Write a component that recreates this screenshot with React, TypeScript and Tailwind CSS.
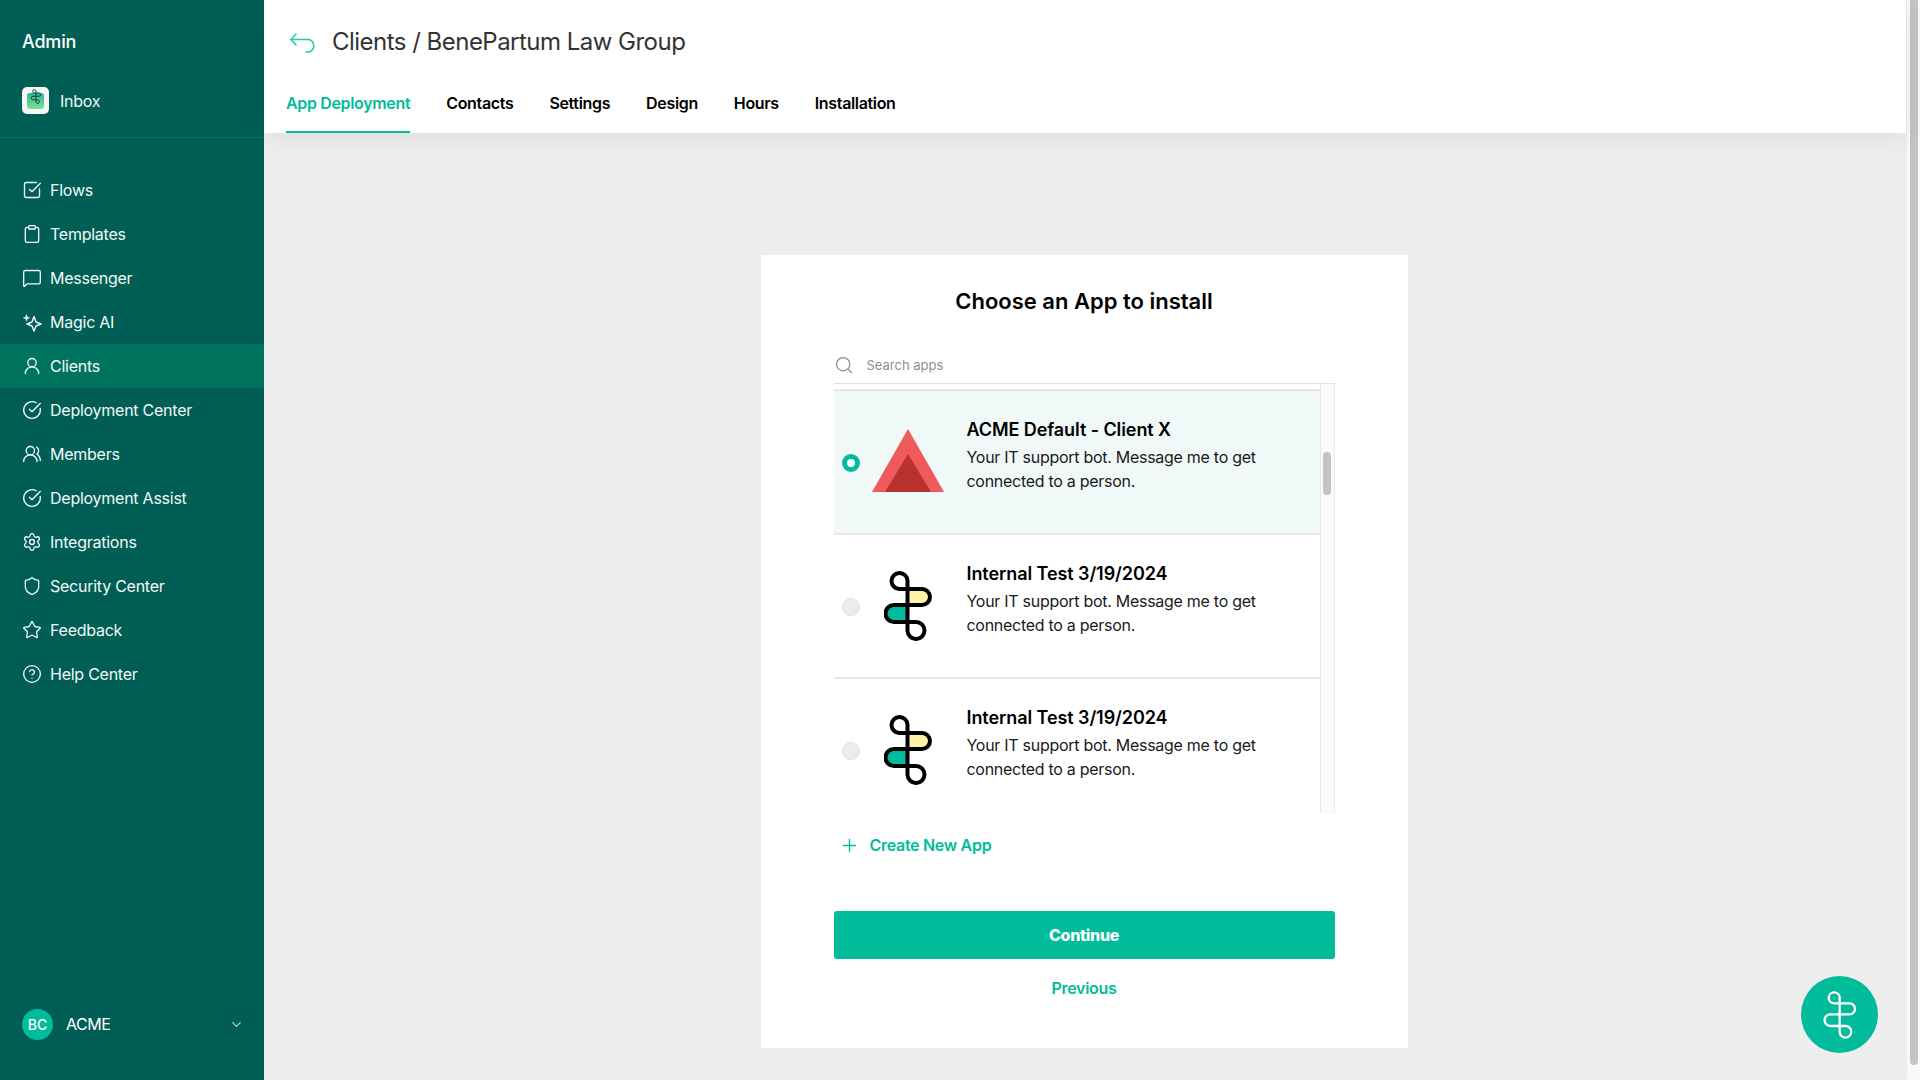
import {
  ChevronDown,
  CircleCheckBig,
  CircleHelp,
  Clipboard,
  MessageSquare,
  Plus,
  Search,
  Settings,
  Shield,
  SquareCheckBig,
  Star,
  UserRound,
  UsersRound,
  type LucideIcon,
} from "lucide-react";

function SparkleIcon({ size = 20 }: { size?: number }) {
  return (
    <svg width={size} height={size} viewBox="0 0 20 20" fill="none" stroke="currentColor" strokeWidth={1.4} strokeLinejoin="round">
      <path d="M12 4.5 L14 10 L19 12 L14 14 L12 19 L10 14 L5 12 L10 10 Z" />
      <path d="M4.5 2.5 L5.3 5 L7.8 5.9 L5.3 6.8 L4.5 9.3 L3.7 6.8 L1.2 5.9 L3.7 5 Z" fill="currentColor" strokeWidth={0.4} />
    </svg>
  );
}

const S_PATH = "M23.5 9.5 A8 8 0 1 0 15 18 H38 A8 8 0 0 1 38 34 H10 A8.5 8.5 0 0 0 10 51 H32 A8.5 8.5 0 1 1 23.5 60 V9.5";

function BrandMark({ colored, className, strokeWidth = 4 }: { colored?: boolean; className: string; strokeWidth?: number }) {
  return (
    <svg viewBox="0 0 48 70" fill="none" className={className}>
      {colored && <path d="M23.5 18 H38 A8 8 0 0 1 38 34 H23.5 Z" fill="#fff3a8" />}
      {colored && <path d="M23.5 34 H10 A8.5 8.5 0 0 0 10 51 H23.5 Z" fill="#00bc9a" />}
      <path d={S_PATH} stroke="currentColor" strokeWidth={strokeWidth} strokeLinecap="round" strokeLinejoin="round" />
    </svg>
  );
}

function TriangleLogo() {
  return (
    <svg viewBox="0 0 72 63" className="w-[72px] h-[63px]">
      <path d="M36 0 L72 63 H0 Z" fill="#ef5a5a" />
      <path d="M36 25 L59 63 H13 Z" fill="#b93230" />
    </svg>
  );
}

const navItems: { label: string; icon: LucideIcon | typeof SparkleIcon; active?: boolean }[] = [
  { label: "Flows", icon: SquareCheckBig },
  { label: "Templates", icon: Clipboard },
  { label: "Messenger", icon: MessageSquare },
  { label: "Magic AI", icon: SparkleIcon },
  { label: "Clients", icon: UserRound, active: true },
  { label: "Deployment Center", icon: CircleCheckBig },
  { label: "Members", icon: UsersRound },
  { label: "Deployment Assist", icon: CircleCheckBig },
  { label: "Integrations", icon: Settings },
  { label: "Security Center", icon: Shield },
  { label: "Feedback", icon: Star },
  { label: "Help Center", icon: CircleHelp },
];

const tabs = ["App Deployment", "Contacts", "Settings", "Design", "Hours", "Installation"];

const apps = [
  { name: "ACME Default - Client X", selected: true },
  { name: "Internal Test 3/19/2024" },
  { name: "Internal Test 3/19/2024" },
];

function Sidebar() {
  return (
    <aside className="w-[264px] shrink-0 h-full bg-[#005e55] text-white flex flex-col">
      <div className="h-[138px] shrink-0 border-b border-[#0b7567] pl-[22px]">
        <div className="pt-[30px] text-[18px] leading-[24px] font-medium tracking-[-0.2px]">Admin</div>
        <div className="mt-[33px] flex items-center gap-[11px]">
          <div className="w-[27px] h-[27px] rounded-[5px] bg-[#f5f7f5] flex items-center justify-center relative overflow-hidden">
            <div className="w-[17px] h-[16px] rounded-[3px] bg-gradient-to-b from-[#12b89a] to-[#7fe08f]" />
            <BrandMark className="absolute top-[2px] left-[9px] w-[10px] h-[15px] text-[#1c2b2a]" strokeWidth={4} />
          </div>
          <span className="text-[16px] leading-[24px] tracking-[-0.25px] text-[#f0f7f5]">Inbox</span>
        </div>
      </div>
      <nav className="mt-[30px] flex flex-col">
        {navItems.map(({ label, icon: Icon, active }) => (
          <div
            key={label}
            className={`h-[44px] flex items-center gap-[8px] pl-[22px] text-[16px] tracking-[-0.25px] text-[#f2f8f6] ${active ? "bg-[#00735f]" : ""}`}
          >
            {Icon === SparkleIcon ? <SparkleIcon size={20} /> : <Icon size={20} strokeWidth={1.6} />}
            <span>{label}</span>
          </div>
        ))}
      </nav>
      <div className="mt-auto h-[32px] mb-[40px] flex items-center pl-[22px] pr-[20px]">
        <div className="w-[31px] h-[31px] rounded-full bg-[#00bc9a] flex items-center justify-center text-[14px] font-medium">BC</div>
        <span className="ml-[13px] text-[16px] tracking-[-0.45px]">ACME</span>
        <ChevronDown size={15} className="ml-auto text-[#b9d0cb]" />
      </div>
    </aside>
  );
}

function Header() {
  return (
    <header className="h-[133px] shrink-0 bg-white pl-[22px] shadow-[0_4px_24px_rgba(0,0,0,0.08)] relative flex flex-col">
      <div className="pt-[24px] h-[79px] flex items-start gap-[12px] pl-[4px]">
        <svg width="30" height="24" viewBox="0 0 30 24" fill="none" stroke="#2fc6a9" strokeWidth={1.6} strokeLinecap="round" strokeLinejoin="round" className="mt-[8px]">
          <path d="M6 2 L1 7.5 L6 13" />
          <path d="M1 7.5 H19 A6.5 6.5 0 0 1 19 20 H16" />
        </svg>
        <h1 className="text-[24px] leading-[36px] tracking-[-0.52px] text-[#333333]">Clients / BenePartum Law Group</h1>
      </div>
      <div className="flex gap-[36px] flex-1">
        {tabs.map((tab, i) => (
          <div
            key={tab}
            className={`h-full flex items-center pb-[4px] text-[16px] tracking-[-0.34px] font-semibold border-b-2 ${i === 0 ? "text-[#00bc9a] border-[#00bc9a]" : "text-black border-transparent"}`}
          >
            {tab}
          </div>
        ))}
      </div>
    </header>
  );
}

function AppRow({ name, selected }: { name: string; selected?: boolean }) {
  return (
    <div className={`h-[144px] shrink-0 flex items-start border-b-2 border-[#e6e6e6] ${selected ? "bg-[#f0f9f7]" : "bg-white"}`}>
      <div className="ml-[8px] mt-[63px] w-[18px] h-[18px] shrink-0">
        {selected ? (
          <div className="w-[18px] h-[18px] rounded-full border-[5px] border-[#00bc9a] bg-white" />
        ) : (
          <div className="w-[18px] h-[18px] rounded-full bg-[#ecece9] border border-[#e2e2df]" />
        )}
      </div>
      <div className={`w-[72px] h-full ml-[12px] shrink-0 flex items-center justify-center ${selected ? "pb-[4px]" : "pb-[1px]"}`}>
        {selected ? <TriangleLogo /> : <BrandMark colored className="w-[48px] h-[70px] text-black" />}
      </div>
      <div className="ml-[23px] pt-[27px] w-[300px]">
        <div className="text-[18px] leading-[24px] tracking-[-0.08px] font-semibold text-black">{name}</div>
        <p className="mt-[3px] text-[16px] leading-[24px] tracking-[-0.28px] text-[#1a1a1a]">Your IT support bot. Message me to get connected to a person.</p>
      </div>
    </div>
  );
}

function AppCard() {
  return (
    <section className="w-[647px] h-[793px] bg-white mt-[122px] px-[73px] flex flex-col">
      <h2 className="mt-[30px] text-center text-[22px] leading-[32px] font-semibold text-black">Choose an App to install</h2>
      <div className="mt-[31px] h-[36px] shrink-0 flex items-center border-b border-[#e2e2e2]">
        <Search size={20} strokeWidth={1.5} className="text-[#8a8a8a] -mt-[2px]" />
        <span className="ml-[13px] text-[13px] text-[#8f8f8f]">Search apps</span>
      </div>
      <div className="h-[429px] shrink-0 flex overflow-hidden">
        <div className="flex-1 min-w-0 pt-[5px]">
          <div className="flex flex-col border-t-2 border-[#e6e6e6]">
            {apps.map((app, i) => (
              <AppRow key={i} name={app.name} selected={app.selected} />
            ))}
          </div>
        </div>
        <div className="w-[15px] shrink-0 bg-[#fafafa] border-l border-r border-[#e8e8e8] pt-[68px] flex justify-center">
          <div className="w-[8px] h-[43px] rounded-full bg-[#c4c4c4]" />
        </div>
      </div>
      <div className="mt-[20px] flex items-center text-[#00bc9a] pl-[5px]">
        <Plus size={21} strokeWidth={1.6} />
        <span className="ml-[10px] text-[16px] leading-[24px] tracking-[-0.3px] font-semibold">Create New App</span>
      </div>
      <button type="button" className="mt-[54px] h-[48px] rounded-[3px] bg-[#00bc9a] text-white text-[16px] tracking-[-0.3px] font-extrabold">
        Continue
      </button>
      <div className="mt-[17px] text-center text-[16px] leading-[24px] tracking-[-0.3px] font-semibold text-[#00bc9a]">Previous</div>
    </section>
  );
}

export default function App() {
  return (
    <div className="w-screen h-screen overflow-hidden flex font-['Inter',sans-serif] antialiased">
      <Sidebar />
      <main className="flex-1 min-w-0 h-full bg-[#eeeeee] flex flex-col relative">
        <Header />
        <div className="flex justify-center pr-[2px]">
          <AppCard />
        </div>
        <div className="absolute left-[1537px] top-[976px] w-[77px] h-[77px] rounded-full bg-[#00bc9a] flex items-center justify-center">
          <BrandMark className="w-[34px] h-[48px] text-white" strokeWidth={3.4} />
        </div>
      </main>
      <div className="w-[14px] shrink-0 h-full bg-[#fafafa] border-l border-[#ececec] flex justify-center pb-[15px]">
        <div className="w-[8px] h-full rounded-b-full bg-[#c4c4c4]" />
      </div>
    </div>
  );
}
